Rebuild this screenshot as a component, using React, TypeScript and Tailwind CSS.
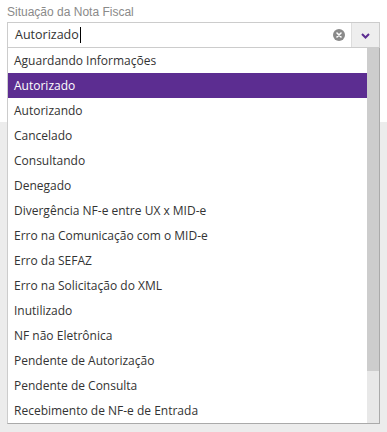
import React from "react";

const options = [
  "Aguardando Informações",
  "Autorizado",
  "Autorizando",
  "Cancelado",
  "Consultando",
  "Denegado",
  "Divergência NF-e entre UX x MID-e",
  "Erro na Comunicação com o MID-e",
  "Erro da SEFAZ",
  "Erro na Solicitação do XML",
  "Inutilizado",
  "NF não Eletrônica",
  "Pendente de Autorização",
  "Pendente de Consulta",
  "Recebimento de NF-e de Entrada",
];

const selected = "Autorizado";

export default function App() {
  return (
    <div className="relative h-[432px] w-[387px] overflow-hidden bg-[#ececec]">
      <div className="h-[122px] bg-white px-[7px] pt-[3px]">
        <div className="h-[19px] font-['Liberation_Sans',Arial,sans-serif] text-[12px] leading-[19px] text-[#8a8a8a]">
          Situação da Nota Fiscal
        </div>
        <div className="flex h-[26px] w-[373px] border border-[#cccccc] bg-white">
          <div className="flex flex-1 items-center pl-[7px] font-['Open_Sans',sans-serif] text-[12.5px] text-[#333]">
            <span>{selected}</span>
            <span className="ml-px h-[16px] w-px bg-black" />
          </div>
          <div className="flex w-[24px] items-center justify-center">
            <svg width="12" height="12" viewBox="0 0 12 12">
              <circle cx="6" cy="6" r="6" fill="#8a8a8a" />
              <path d="M4 4l4 4M8 4l-4 4" stroke="#fff" strokeWidth="1.6" strokeLinecap="round" />
            </svg>
          </div>
          <div className="flex w-[28px] items-center justify-center border-l border-[#dddddd] bg-[#eeeeee]">
            <svg width="9" height="6" viewBox="0 0 9 6" className="mt-[2px]">
              <path d="M1 1l3.5 3.5L8 1" fill="none" stroke="#5c2d91" strokeWidth="2" />
            </svg>
          </div>
        </div>
      </div>

      <div className="absolute left-[7px] top-[48px] flex h-[376px] w-[373px] border-x border-b border-l-[#cccccc] border-r-[#aaaaaa] border-b-[#aaaaaa] bg-white">
        <ul className="flex-1 font-['Open_Sans',sans-serif] text-[12px]">
          {options.map((option) => (
            <li
              key={option}
              className={
                option === selected
                  ? "flex h-[25px] items-center bg-[#5c2d91] pl-[6px] text-white"
                  : "flex h-[25px] items-center pl-[6px] text-[#333]"
              }
            >
              {option}
            </li>
          ))}
        </ul>
        <div className="w-[12px] bg-[#e8e8e8]">
          <div className="h-[323px] bg-[#cdcdcd]" />
        </div>
      </div>
    </div>
  );
}
